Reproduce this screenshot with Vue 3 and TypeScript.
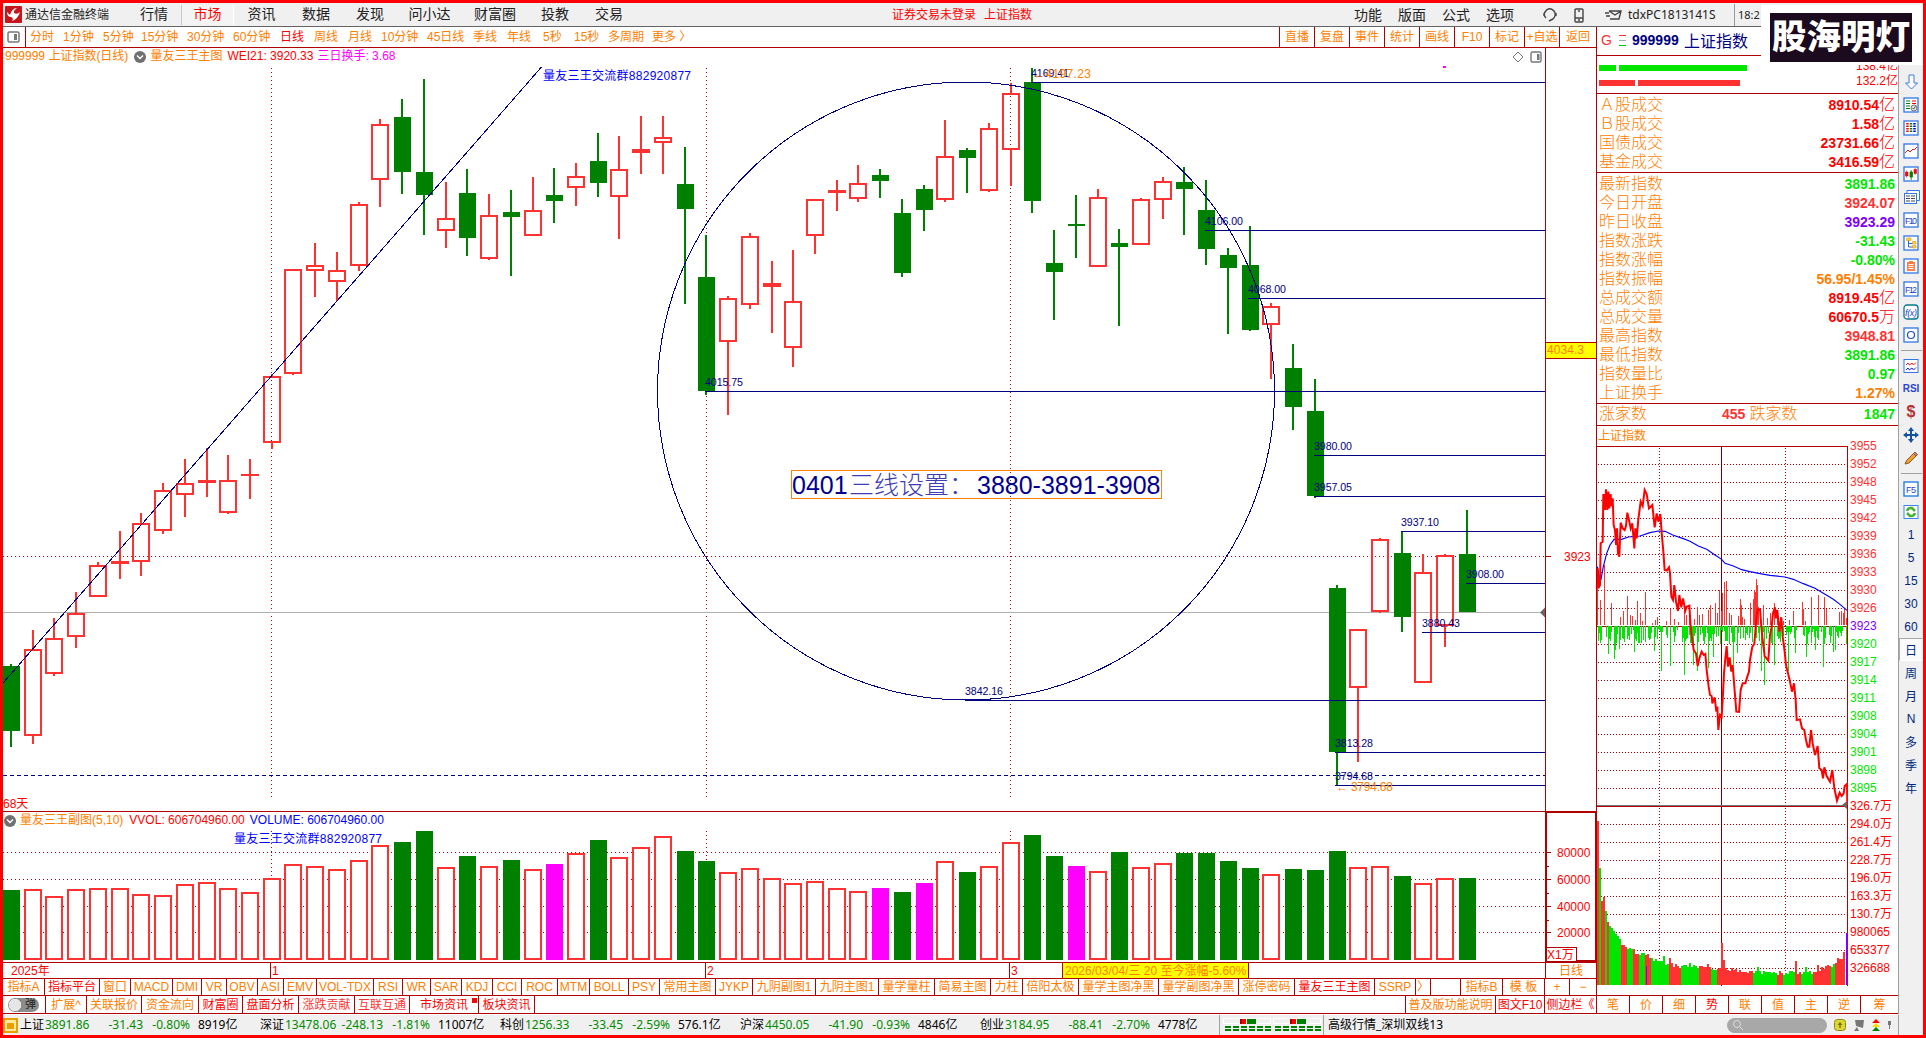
<template>
  <div class="terminal">
    <header class="menu_bar">
      <svg class="logo" width="17" height="17" viewBox="0 0 17 17">
        <rect width="17" height="17" rx="1" fill="#c4161c" />
        <path d="M2 6 L5 9 Q7 2 12 2 Q8 5 9 7 Q12 9 15 6 Q13 13 7 15 Q9 12 6 11 Q2 11 2 6Z" fill="#fff" />
      </svg>
      <span class="app_name">通达信金融终端</span>
      <nav class="menu">
        <span
          v-for="m in menus"
          :key="m.label"
          class="menu_item"
          :class="{ active: m.label === '市场' }"
          :style="{ width: m.width + 'px' }"
          >{{ m.label }}</span
        >
      </nav>
      <div class="notice"><span>证券交易未登录</span><span>上证指数</span></div>
      <nav class="menu_right">
        <span v-for="m in ['功能', '版面', '公式', '选项']" :key="m">{{ m }}</span>
      </nav>
      <svg class="menu_icons" width="84" height="20" viewBox="0 0 84 20" fill="none" stroke="#444" stroke-width="1.4">
        <path d="M5 13 Q2 10 4 7 Q8 1 13 6 Q16 10 12 14 M3 8v3 M15 8v3 M12 14 L8 16" />
        <rect x="34" y="4" width="8" height="13" rx="1" />
        <path d="M34 13h8 M37 6h2 M37 15h2" />
        <path d="M68 6h12l-2 8h-9 M68 6l6 4 6-4 M64 8h4 M65 11h4" />
      </svg>
      <span class="account">tdxPC1813141S</span>
      <span class="clock">18:2</span>
    </header>

    <div class="body">
      <div class="content">
        <div class="main">
          <section class="left">
            <div class="period_bar">
              <svg class="panel_icon" width="13" height="12" viewBox="0 0 13 12">
                <rect x="1" y="1" width="11" height="10" rx="1.5" fill="none" stroke="#777" stroke-width="1.5" />
                <rect x="7" y="3" width="3" height="6" fill="#777" />
              </svg>
              <div class="periods">
                <span
                  v-for="p in periods"
                  :key="p.label"
                  :class="{ active: p.label === '日线' }"
                  :style="{ width: p.width + 'px' }"
                  >{{ p.label }}</span
                >
              </div>
              <div class="tools">
                <span v-for="t in tools" :key="t" class="tool">{{ t }}</span>
              </div>
            </div>

            <div class="chart_row">
              <div class="charts">
                <div class="chart_head">
                  <span class="orange">999999 上证指数(日线)</span>
                  <svg class="chevron" width="12" height="12" viewBox="0 0 12 12">
                    <circle cx="6" cy="6" r="6" fill="#707070" />
                    <path d="M3 4.5L6 7.5L9 4.5" fill="none" stroke="#fff" stroke-width="1.4" />
                  </svg>
                  <span class="orange">量友三王主图</span>
                  <span class="red">WEI21: 3920.33</span>
                  <span class="magenta">三日换手: 3.68</span>
                  <svg class="head_tools" width="30" height="12" viewBox="0 0 30 12" fill="none" stroke="#777">
                    <path d="M6 1L11 6L6 11L1 6Z" />
                    <rect x="19" y="1" width="10" height="10" rx="1.5" stroke-width="1.4" />
                    <rect x="25" y="3" width="2.5" height="6" fill="#777" stroke="none" />
                  </svg>
                </div>
                <svg class="k_chart" width="1542" height="745" viewBox="3 66 1542 745">
                  <g stroke="#b00000" stroke-dasharray="1 3" shape-rendering="crispEdges">
                    <path v-for="x in monthLines" :key="x" :d="`M${x + 0.5} 68V797`" />
                    <path d="M3 556.5H1545" />
                  </g>
                  <path d="M3 612.5H1545" stroke="#b0b0b0" />
                  <path d="M3 775.5H1545" stroke="#000080" stroke-dasharray="4 3" shape-rendering="crispEdges" />
                  <g shape-rendering="crispEdges">
                    <g v-for="(c, i) in candles" :key="i">
                      <template v-if="c[0] === 'g'">
                        <rect :x="cx(i) - 1" :y="c[1]" width="2" :height="c[4] - c[1]" fill="#008000" />
                        <rect :x="Math.max(3, cx(i) - 8)" :y="c[2]" width="17" :height="c[3] - c[2]" fill="#008000" />
                      </template>
                      <template v-else>
                        <rect :x="cx(i) - 1" :y="c[1]" width="2" :height="c[2] - c[1]" fill="#ff3232" />
                        <rect :x="cx(i) - 1" :y="c[3]" width="2" :height="c[4] - c[3]" fill="#ff3232" />
                        <rect
                          v-if="c[3] - c[2] > 4"
                          :x="cx(i) - 8"
                          :y="c[2] + 1"
                          width="16"
                          :height="c[3] - c[2] - 2"
                          fill="none"
                          stroke="#ff3232"
                          stroke-width="2"
                        />
                        <rect v-else :x="cx(i) - 9" :y="c[2]" width="18" :height="c[3] - c[2]" fill="#ff3232" />
                      </template>
                    </g>
                  </g>
                  <g fill="none" stroke="#000080" shape-rendering="crispEdges">
                    <ellipse cx="966" cy="391" rx="308.5" ry="309" />
                    <path d="M3 683L541.5 67" />
                    <path v-for="l in levels" :key="l.text" :d="`M${l.x} ${l.y + 0.5}H1545`" />
                  </g>
                  <g class="level_text">
                    <text v-for="l in levels" :key="l.text" :x="l.x" :y="l.y - 5" textLength="38">{{ l.text }}</text>
                  </g>
                  <text x="1033" y="78" class="t12" fill="#ff8000" textLength="58">←4197.23</text>
                  <text x="1336" y="791" class="t12" fill="#ff8000" textLength="57">← 3794.68</text>
                  <text x="543" y="80" class="t12" fill="#0000ff" textLength="148">量友三王交流群882920877</text>
                  <rect x="1443" y="65" width="3" height="3" fill="#ff00ff" />
                  <path d="M1540 612.5l5-5v10z" fill="#666" />
                  <rect x="791.5" y="470.5" width="370" height="28" fill="none" stroke="#ff8000" />
                  <text x="792" y="494" class="note">
                    0401<tspan x="849" class="note_cn">三线设置：</tspan><tspan x="977">3880-3891-3908</tspan>
                  </text>
                  <text x="3" y="808" class="t12" fill="#ff0000">68天</text>
                </svg>
                <div class="chart_head sub">
                  <svg class="chevron" width="12" height="12" viewBox="0 0 12 12">
                    <circle cx="6" cy="6" r="6" fill="#707070" />
                    <path d="M3 4.5L6 7.5L9 4.5" fill="none" stroke="#fff" stroke-width="1.4" />
                  </svg>
                  <span class="orange">量友三王副图(5,10)</span>
                  <span class="red">VVOL: 606704960.00</span>
                  <span class="blue">VOLUME: 606704960.00</span>
                </div>
                <svg class="v_chart" width="1542" height="133" viewBox="3 829 1542 133">
                  <g stroke="#b00000" stroke-dasharray="1 3" shape-rendering="crispEdges">
                    <path v-for="x in monthLines" :key="x" :d="`M${x + 0.5} 831V960`" />
                    <path v-for="y in volLines" :key="y" :d="`M3 ${y + 0.5}H1545`" />
                  </g>
                  <g shape-rendering="crispEdges">
                    <template v-for="(v, i) in volumes" :key="i">
                      <rect
                        v-if="v[0] === 'r'"
                        :x="cx(i) - 8"
                        :y="v[1] + 1"
                        width="16"
                        :height="958 - v[1]"
                        fill="#fff"
                        stroke="#ff3232"
                        stroke-width="2"
                      />
                      <rect
                        v-else
                        :x="Math.max(3, cx(i) - 8)"
                        :y="v[1]"
                        width="17"
                        :height="960 - v[1]"
                        :fill="v[0] === 'g' ? '#008000' : '#ff00ff'"
                      />
                    </template>
                  </g>
                  <text x="234" y="843" class="t12" fill="#0000ff" textLength="148">量友三王交流群882920877</text>
                </svg>
              </div>
              <svg class="axis" width="51" height="914" viewBox="1545 48 51 914">
                <path d="M1545.5 48V811" stroke="#b00000" />
                <rect x="1546" y="812" width="50" height="149" fill="none" stroke="#b00000" stroke-width="2" />
                <rect x="1546" y="343" width="50" height="15" fill="#ffff00" />
                <path d="M1546 342.5H1596M1546 358.5H1596M1545 556.5h6" stroke="#b00000" />
                <text x="1547" y="354" class="t12" fill="#ff8000" textLength="37">4034.3</text>
                <text x="1564" y="560.5" class="t12" fill="#ff0000">3923</text>
                <g v-for="(y, i) in volLines" :key="y">
                  <path :d="`M1546 ${y + 0.5}h5`" stroke="#b00000" />
                  <path v-if="i < 3" :d="`M1546 ${y + 14.5}h3`" stroke="#b00000" />
                  <text x="1557" :y="y + 4.5" class="t12" fill="#ff0000">{{ 80000 - i * 20000 }}</text>
                </g>
                <rect x="1546.5" y="947.5" width="30" height="14" fill="#fff" stroke="#b00000" />
                <text x="1547" y="959" class="t12" fill="#ff0000">X1万</text>
              </svg>
            </div>

            <div class="date_row">
              <span class="date first">2025年</span>
              <span class="date jan">1</span>
              <span class="date feb">2</span>
              <span class="date mar">3</span>
              <span class="cursor_date">2026/03/04/三 20 至今涨幅-5.60%</span>
              <span class="date_period">日线</span>
            </div>
            <div class="tab_row">
              <span
                v-for="t in indicators"
                :key="t.label"
                class="tab"
                :class="{ active: t.active }"
                :style="{ width: t.width + 'px' }"
                >{{ t.label }}</span
              >
            </div>
            <div class="tab_row second">
              <span class="tab toggle_cell"><span class="toggle">弹</span></span>
              <span
                v-for="t in panels"
                :key="t.label"
                class="tab"
                :class="{ active: t.active, soft: t.soft }"
                :style="{ width: t.width + 'px' }"
                >{{ t.label }}<i v-if="t.dot" class="dot"></i
              ></span>
            </div>
          </section>

          <aside class="quote">
            <div class="quote_head">
              <span class="g_mark">G</span>
              <span class="lines"><i></i><i></i><i></i></span>
              <b>999999</b>
              <span>上证指数</span>
            </div>
            <div class="ratio">
              <div class="ratio_row up"><i class="w17"></i><i class="w128"></i><span>138.4亿</span></div>
              <div class="ratio_row down"><i class="w36"></i><i class="w102"></i><span>132.2亿</span></div>
            </div>
            <div class="quote_list turnover">
              <div v-for="q in turnover" :key="q.label" class="quote_row">
                <span>{{ q.label }}</span
                ><b :class="q.color">{{ q.value }}<em>{{ q.unit }}</em></b>
              </div>
            </div>
            <div class="quote_list">
              <div v-for="q in quotes" :key="q.label" class="quote_row">
                <span>{{ q.label }}</span
                ><b :class="q.color">{{ q.value }}<em>{{ q.unit }}</em></b>
              </div>
            </div>
            <div class="updown">
              <span>涨家数</span><b class="soft_red num_up">455</b><span class="fall">跌家数</span><b class="green num_down">1847</b>
            </div>
            <div class="mini_title">上证指数</div>
            <div class="mini">
              <svg width="252" height="549" viewBox="1596 446 252 549">
                <g stroke="#b00000" shape-rendering="crispEdges">
                  <g stroke-dasharray="1 2">
                    <path v-for="y in miniLines" :key="y" :d="`M1598 ${y + 0.5}H1847`" />
                    <path d="M1659.5 448V985M1785.5 448V985" />
                  </g>
                  <path d="M1597 446.5H1847M1847.5 446V986M1597 626.5H1847M1597 806.5H1847M1596.5 446V995" />
                  <path d="M1721.5 446V986" stroke="#800000" />
                  <path d="M1847 985.5H1848" />
                </g>
                <path d="M1597 805.5H1845" stroke="#777" />
                <g shape-rendering="crispEdges">
                  <rect v-for="(b, i) in upBars" :key="i" :x="b[0]" :y="625 - b[1]" width="1" :height="b[1]" fill="#ff3232" />
                  <rect v-for="(b, i) in downBars" :key="i" :x="b[0]" y="626" width="1" :height="b[1]" fill="#00e600" />
                  <rect
                    v-for="(b, i) in miniVolumes"
                    :key="i"
                    :x="1597 + i * 2"
                    :y="985 - b.h"
                    width="2"
                    :height="b.h"
                    :fill="b.up ? '#ff3232' : '#00e600'"
                  />
                  <rect x="1846" y="933" width="2" height="52" fill="#8000ff" />
                  <rect x="1646" y="966" width="1" height="19" fill="#8000ff" />
                </g>
                <g transform="translate(1540 420) scale(0.33333)" fill="none">
                  <polyline :points="avgLine" stroke="#0000ff" stroke-width="3.5" />
                  <polyline :points="priceLine" stroke="#ff0000" stroke-width="6" />
                </g>
                <path d="M1842 805l5-4v8z" fill="#666" />
              </svg>
              <ul class="mini_axis">
                <li v-for="(t, i) in miniAxis" :key="t" :class="i < 10 ? 'soft_red' : i === 10 ? 'purple' : i < 20 ? 'green' : 'red'">
                  {{ t }}
                </li>
              </ul>
            </div>
            <div class="mini_tabs">
              <span v-for="t in '笔价细势联值主逆筹'" :key="t" :class="{ active: t === '势' }">{{ t }}</span>
            </div>
          </aside>
        </div>

        <footer class="status">
          <svg class="status_icon" width="15" height="15" viewBox="0 0 15 15">
            <rect x="1" y="1" width="13" height="13" fill="#ffe9a0" stroke="#e8a000" stroke-width="2" />
            <rect x="4" y="5" width="7" height="6" fill="#e8a000" />
          </svg>
          <div v-for="s in indexes" :key="s.name" class="index">
            <span>{{ s.name }}</span
            ><span class="fall_num">{{ s.price }}</span
            ><span class="fall_num right">{{ s.change }}</span
            ><span class="fall_num right">{{ s.pct }}</span
            ><span class="amount">{{ s.amount }}</span>
          </div>
          <div class="signal">
            <svg width="100" height="15" viewBox="0 0 100 15" shape-rendering="crispEdges">
              <g v-for="o in [0, 50]" :key="o" :transform="`translate(${o} 0)`">
                <rect x="0.5" y="0.5" width="47" height="5" fill="#f0f0f0" stroke="#fff" />
                <rect x="17" y="1" width="2" height="5" fill="#a00000" />
                <rect x="19" y="1" width="4" height="5" fill="#ff0000" />
                <rect x="24" y="1" width="9" height="5" fill="#008000" />
                <path d="M2 9H48M2 12H48" stroke="#008000" stroke-width="2" stroke-dasharray="6 2" />
              </g>
            </svg>
          </div>
          <span class="server">高级行情_深圳双线13</span>
          <div class="search">
            <svg width="12" height="12" viewBox="0 0 12 12" fill="none" stroke="#ddd">
              <circle cx="5" cy="5" r="3.5" />
              <path d="M8 8l3 3" />
            </svg>
          </div>
          <svg class="status_tools" width="62" height="15" viewBox="0 0 62 15">
            <rect x="0.5" y="1.5" width="11" height="11" rx="3" fill="#dcd53c" stroke="#8c8a00" />
            <path d="M6 4L3.500 7H5.300V10H6.700V7H8.500Z" fill="#77740a" />
            <path d="M21 2L30 2L29 10L22 8Z M23 9L20 13H25Z" fill="#777" />
            <path d="M42 1L46 5H38Z" fill="#ff0000" />
            <path d="M42 5L46 9H38Z" fill="#f0e000" />
            <path d="M42 9L46 13H38Z" fill="#008000" />
            <path d="M54 3h3v4h-3zM55 7h1v4h-1z" fill="#777" />
          </svg>
        </footer>
      </div>

      <div class="side_bar">
        <div class="side_spacer"></div>
        <div v-for="icon in sideTop" :key="icon" class="side_cell">
          <svg v-if="icon === 'down'" width="15" height="16" viewBox="0 0 15 16">
            <path d="M5 1H10V9H13.500L7.500 15L1.500 9H5Z" fill="#fff" stroke="#3c78dc" />
          </svg>
          <svg v-else width="17" height="16" viewBox="0 0 17 16">
            <rect
              x="1"
              y="1"
              width="14"
              height="14"
              :rx="icon === 'fx' ? 3 : 0"
              fill="#fff"
              :stroke="icon === 'fx' ? '#0a7890' : '#3278e6'"
              stroke-width="1.3"
            />
            <g v-if="icon === 'check'" fill="none">
              <path d="M3 4H7M3 6.500H7M3 9H7M3 11.500H7" stroke="#008000" />
              <path d="M9 4H13M9 6.500H13" stroke="#f00" />
              <circle cx="11" cy="11" r="3" fill="#ddd" stroke="#777" />
              <path d="M9.500 11l1 1 2-2.500" stroke="#555" />
            </g>
            <g v-else-if="icon === 'table'" stroke-dasharray="1.500 1" stroke-width="2.500">
              <path d="M4.500 3V13" stroke="#f00" />
              <path d="M8 3V13" stroke="#008000" />
              <path d="M11.500 3V13" stroke="#00f" />
            </g>
            <path v-else-if="icon === 'line'" d="M2 10L5 7L7 9L10 6L11 7L14 4" fill="none" stroke="#d22" />
            <g v-else-if="icon === 'candle'">
              <path d="M2.500 6h2.500v4H2.500zM11 3.500h2.500v4H11zM3.500 4.500v7M12.200 2v7" fill="#f00" stroke="#f00" stroke-width=".6" />
              <path d="M7 6h2.500v5H7zM8.200 4v10" fill="#008000" stroke="#008000" stroke-width=".8" />
            </g>
            <g v-else-if="icon === 'pages'">
              <rect width="17" height="16" fill="#f0f0f0" />
              <path d="M4 4V1.500H16.500V11.500H14" fill="#fff" stroke="#3278e6" />
              <rect x="1.500" y="4.500" width="12" height="10" fill="#fff" stroke="#3278e6" />
              <path d="M3 7H7M3 9.500H7M3 12H7M8 7H12M8 9.500H12M8 12H12" stroke="#445" />
            </g>
            <g v-else-if="icon === 'tree'">
              <path d="M5.500 5V12H10M5.500 8.500H10" fill="none" stroke="#3264c8" />
              <path d="M3.500 3H8V5.500H3.500zM9.500 6.500H13V9H9.500zM9.500 10.500H13V13H9.500z" fill="#ffd24a" stroke="#d89a00" stroke-width=".6" />
            </g>
            <g v-else-if="icon === 'note'">
              <path d="M4 4H12V13H4zM6 3H10V4H6z" fill="#ff7d46" />
              <path d="M5.500 6.500H10.500M5.500 8.500H10.500M5.500 10.500H10.500" stroke="#fff" />
            </g>
            <circle v-else-if="icon === 'ring'" cx="8" cy="8" r="3.500" fill="none" stroke="#1e50c8" stroke-width="1.200" />
            <text v-else x="8" y="11.500" class="icon_text" :class="{ italic: icon === 'fx' }" textLength="12">
              {{ iconLabels[icon] }}
            </text>
          </svg>
        </div>
        <div class="side_sep"></div>
        <div class="side_cell">
          <svg width="17" height="16" viewBox="0 0 17 16" fill="none">
            <rect x="1" y="1.500" width="14" height="13" fill="#fff" stroke="#3278e6" />
            <path d="M3 7L5 5L6.500 7L9 5L10.500 7L13 4.500" stroke="#d22" />
            <path d="M3 12L5 10L6.500 12L9 10L10.500 12L13 9.500" stroke="#22c" />
          </svg>
        </div>
        <div class="side_cell rsi">RSI</div>
        <div class="side_cell dollar">$</div>
        <div class="side_cell">
          <svg width="16" height="16" viewBox="0 0 16 16" fill="#1450a0">
            <path d="M8 0L11 4H5zM8 16L5 12H11zM0 8L4 5V11zM16 8L12 11V5z" />
            <path d="M8 3V13M3 8H13" stroke="#1450a0" stroke-width="2" />
          </svg>
        </div>
        <div class="side_cell">
          <svg width="16" height="16" viewBox="0 0 16 16">
            <path d="M2 14L3.500 10.500L10.500 3.500L13 6L6 13Z" fill="#f0a030" stroke="#8a5a20" />
            <path d="M10.500 3.500L12 2L14.500 4.500L13 6Z" fill="#e07a70" stroke="#8a5a50" />
          </svg>
        </div>
        <div class="side_sep"></div>
        <div class="side_cell">
          <svg width="17" height="16" viewBox="0 0 17 16">
            <rect x="1" y="1" width="14" height="14" fill="#fff" stroke="#1478dc" stroke-width="1.300" />
            <text x="8" y="11.500" class="icon_text" textLength="10">F5</text>
          </svg>
        </div>
        <div class="side_cell">
          <svg width="17" height="16" viewBox="0 0 17 16" fill="none">
            <rect x="1" y="1.500" width="14" height="13" fill="#fff" stroke="#3c82f0" />
            <path d="M4 7Q5 3.500 9 4L12 7M12 9Q11 12.500 7 12L4 9" stroke="#46b432" stroke-width="2.500" />
          </svg>
        </div>
        <div v-for="t in sidePeriods" :key="t" class="side_cell period" :class="{ active: t === '日' }">{{ t }}</div>
      </div>
    </div>

    <div class="watermark"><span>股海明灯</span></div>
  </div>
</template>

<script lang="ts" setup>
type Candle = [string, number, number, number, number];
type Volume = [string, number];

interface Tab {
  label: string;
  width: number;
  active?: boolean;
  soft?: boolean;
  dot?: boolean;
}

interface Quote {
  label: string;
  value: string;
  unit?: string;
  color: string;
}

const menus: Tab[] = [
  { label: '行情', width: 54 },
  { label: '市场', width: 53 },
  { label: '资讯', width: 55 },
  { label: '数据', width: 54 },
  { label: '发现', width: 54 },
  { label: '问小达', width: 65 },
  { label: '财富圈', width: 66 },
  { label: '投教', width: 54 },
  { label: '交易', width: 54 },
];

const periods: Tab[] = [
  { label: '分时', width: 33 },
  { label: '1分钟', width: 40 },
  { label: '5分钟', width: 38 },
  { label: '15分钟', width: 46 },
  { label: '30分钟', width: 46 },
  { label: '60分钟', width: 47 },
  { label: '日线', width: 34 },
  { label: '周线', width: 34 },
  { label: '月线', width: 33 },
  { label: '10分钟', width: 46 },
  { label: '45日线', width: 46 },
  { label: '季线', width: 34 },
  { label: '年线', width: 36 },
  { label: '5秒', width: 31 },
  { label: '15秒', width: 34 },
  { label: '多周期', width: 44 },
  { label: '更多 〉', width: 50 },
];

const tools = ['直播', '复盘', '事件', '统计', '画线', 'F10', '标记', '+自选', '返回'];

const indicators: Tab[] = [
  { label: '指标A', width: 42 },
  { label: '指标平台', width: 55, active: true },
  { label: '窗口', width: 31 },
  { label: 'MACD', width: 42 },
  { label: 'DMI', width: 29 },
  { label: 'VR', width: 25 },
  { label: 'OBV', width: 31 },
  { label: 'ASI', width: 26 },
  { label: 'EMV', width: 33 },
  { label: 'VOL-TDX', width: 57 },
  { label: 'RSI', width: 29 },
  { label: 'WR', width: 28 },
  { label: 'SAR', width: 31 },
  { label: 'KDJ', width: 31 },
  { label: 'CCI', width: 29 },
  { label: 'ROC', width: 36 },
  { label: 'MTM', width: 32 },
  { label: 'BOLL', width: 39 },
  { label: 'PSY', width: 31 },
  { label: '常用主图', width: 56 },
  { label: 'JYKP', width: 37 },
  { label: '九阴副图1', width: 63 },
  { label: '九阴主图1', width: 63 },
  { label: '量学量柱', width: 56 },
  { label: '简易主图', width: 56 },
  { label: '力柱', width: 32 },
  { label: '倍阳太极', width: 56 },
  { label: '量学主图净黑', width: 80 },
  { label: '量学副图净黑', width: 80 },
  { label: '涨停密码', width: 56 },
  { label: '量友三王主图', width: 80, active: true },
  { label: 'SSRP', width: 41 },
  { label: '〉', width: 15 },
  { label: '', width: 30 },
  { label: '指标B', width: 42 },
  { label: '模 板', width: 42 },
  { label: '+', width: 25 },
  { label: '−', width: 26 },
];

const panels: Tab[] = [
  { label: '扩展^', width: 41 },
  { label: '关联报价', width: 55 },
  { label: '资金流向', width: 57 },
  { label: '财富圈', width: 44, active: true },
  { label: '盘面分析', width: 56, active: true },
  { label: '涨跌贡献', width: 56, soft: true },
  { label: '互联互通', width: 55, soft: true },
  { label: '市场资讯', width: 69, active: true, dot: true },
  { label: '板块资讯', width: 56, active: true },
  { label: '', width: 871 },
  { label: '普及版功能说明', width: 90 },
  { label: '图文F10', width: 49, active: true },
  { label: '侧边栏《', width: 51, active: true },
];

// x centre of the i-th day
const cx = (i: number) => Math.round(11 + i * 21.73);

const monthLines = [271, 706, 1010];
const volLines = [852, 879, 906, 932];

// [colour, high, body top, body bottom, low]
const candles: Candle[] = [
  ['g', 664, 666, 731, 747],
  ['r', 630, 649, 736, 744],
  ['r', 618, 638, 674, 676],
  ['r', 592, 613, 637, 648],
  ['r', 562, 565, 597, 597],
  ['r', 531, 561, 564, 579],
  ['r', 513, 523, 562, 576],
  ['r', 483, 490, 531, 534],
  ['r', 459, 483, 495, 517],
  ['r', 448, 480, 483, 497],
  ['r', 455, 480, 513, 514],
  ['r', 459, 474, 476, 499],
  ['r', 374, 376, 443, 449],
  ['r', 269, 269, 374, 375],
  ['r', 243, 265, 271, 297],
  ['r', 252, 270, 282, 301],
  ['r', 202, 204, 266, 271],
  ['r', 119, 124, 180, 207],
  ['g', 99, 117, 172, 194],
  ['g', 79, 172, 195, 235],
  ['r', 182, 218, 231, 248],
  ['g', 169, 193, 238, 256],
  ['r', 194, 215, 259, 260],
  ['g', 190, 212, 217, 276],
  ['r', 177, 210, 236, 236],
  ['g', 168, 195, 201, 223],
  ['r', 163, 176, 188, 206],
  ['g', 133, 161, 183, 197],
  ['r', 136, 169, 197, 239],
  ['r', 116, 149, 153, 174],
  ['r', 116, 137, 143, 174],
  ['g', 147, 184, 209, 304],
  ['g', 235, 277, 391, 395],
  ['r', 296, 298, 342, 415],
  ['r', 233, 236, 305, 309],
  ['r', 261, 283, 287, 333],
  ['r', 250, 301, 348, 367],
  ['r', 199, 199, 236, 254],
  ['r', 180, 190, 193, 211],
  ['r', 165, 183, 199, 202],
  ['g', 169, 175, 181, 198],
  ['g', 199, 213, 273, 277],
  ['g', 185, 189, 210, 231],
  ['r', 120, 156, 200, 202],
  ['g', 148, 150, 158, 193],
  ['r', 123, 128, 191, 192],
  ['r', 83, 93, 150, 186],
  ['g', 68, 82, 201, 213],
  ['g', 230, 263, 272, 320],
  ['g', 195, 224, 226, 258],
  ['r', 189, 197, 267, 267],
  ['g', 229, 243, 247, 326],
  ['r', 198, 199, 245, 245],
  ['r', 177, 181, 200, 219],
  ['g', 167, 182, 189, 235],
  ['g', 180, 210, 249, 265],
  ['g', 248, 255, 268, 334],
  ['g', 226, 265, 330, 331],
  ['r', 303, 306, 325, 379],
  ['g', 344, 368, 407, 430],
  ['g', 379, 411, 496, 498],
  ['g', 585, 588, 752, 785],
  ['r', 629, 629, 688, 762],
  ['r', 538, 539, 612, 613],
  ['g', 532, 553, 617, 632],
  ['r', 554, 572, 683, 683],
  ['r', 554, 555, 626, 647],
  ['g', 510, 554, 612, 612],
];

const volTops = [
  890, 889, 896, 889, 888, 888, 894, 895, 884, 882, 888, 892, 878, 864, 866, 869, 860, 845, 842, 831, 867, 856, 866,
  860, 869, 864, 853, 840, 857, 847, 836, 851, 861, 872, 868, 878, 883, 881, 888, 891, 888, 892, 883, 861, 872, 866,
  842, 835, 856, 866, 871, 852, 867, 863, 853, 853, 861, 868, 874, 869, 870, 851, 867, 866, 876, 883, 878, 878,
];
const magentaDays = [25, 40, 42, 49];
const greenDays = [0, 18, 19, 21, 23, 27, 31, 32, 41, 44, 47, 48, 51, 54, 55, 56, 57, 59, 60, 61, 64, 67];
const volumes: Volume[] = volTops.map((y, i) => [
  magentaDays.includes(i) ? 'm' : greenDays.includes(i) ? 'g' : 'r',
  y,
]);

const levels = [
  { x: 1031, y: 82, text: '4169.41' },
  { x: 1205, y: 230, text: '4106.00' },
  { x: 1248, y: 298, text: '4068.00' },
  { x: 705, y: 391, text: '4015.75' },
  { x: 1314, y: 455, text: '3980.00' },
  { x: 1314, y: 496, text: '3957.05' },
  { x: 1401, y: 531, text: '3937.10' },
  { x: 1466, y: 583, text: '3908.00' },
  { x: 1422, y: 632, text: '3880.43' },
  { x: 965, y: 700, text: '3842.16' },
  { x: 1335, y: 752, text: '3813.28' },
  { x: 1335, y: 785, text: '3794.68' },
];

const turnover: Quote[] = [
  { label: 'Ａ股成交', value: '8910.54', unit: '亿', color: 'red' },
  { label: 'Ｂ股成交', value: '1.58', unit: '亿', color: 'red' },
  { label: '国债成交', value: '23731.66', unit: '亿', color: 'red' },
  { label: '基金成交', value: '3416.59', unit: '亿', color: 'red' },
];

const quotes: Quote[] = [
  { label: '最新指数', value: '3891.86', color: 'green' },
  { label: '今日开盘', value: '3924.07', color: 'soft_red' },
  { label: '昨日收盘', value: '3923.29', color: 'purple' },
  { label: '指数涨跌', value: '-31.43', color: 'green' },
  { label: '指数涨幅', value: '-0.80%', color: 'green' },
  { label: '指数振幅', value: '56.95/1.45%', color: 'orange' },
  { label: '总成交额', value: '8919.45', unit: '亿', color: 'red' },
  { label: '总成交量', value: '60670.5', unit: '万', color: 'red' },
  { label: '最高指数', value: '3948.81', color: 'soft_red' },
  { label: '最低指数', value: '3891.86', color: 'green' },
  { label: '指数量比', value: '0.97', color: 'green' },
  { label: '上证换手', value: '1.27%', color: 'orange' },
];

const miniAxis = [
  '3955', '3952', '3948', '3945', '3942', '3939', '3936', '3933', '3930', '3926', '3923', '3920', '3917', '3914',
  '3911', '3908', '3904', '3901', '3898', '3895', '326.7万', '294.0万', '261.4万', '228.7万', '196.0万', '163.3万',
  '130.7万', '980065', '653377', '326688',
];
const miniLines = Array.from({ length: 29 }, (_, i) => 464 + i * 18).filter((y) => y !== 626 && y !== 806);

const avgLine =
  '172,440 178,475 183,478 190,440 200,400 210,375 222,358 245,358 265,351 300,348 330,338 355,333 375,334 400,346 430,356 450,364 475,378 500,388 525,405 545,418 555,430 580,438 605,449 630,455 660,461 690,466 735,471 760,478 790,491 825,505 850,520 880,538 900,553 921,571';
const priceLine =
  '173,445 175,505 180,495 182,370 188,365 190,225 194,225 195,270 198,208 202,270 205,215 208,265 212,222 214,258 218,235 221,315 225,330 228,375 231,325 234,400 238,410 242,308 248,325 254,330 258,318 262,278 267,300 272,325 277,310 283,385 286,325 290,355 295,298 302,245 308,258 314,210 320,222 327,265 337,255 344,322 350,280 355,305 361,282 366,350 370,395 374,450 380,452 387,442 390,460 394,530 399,540 403,495 408,545 414,573 418,525 424,562 429,535 436,572 440,560 448,557 452,620 457,660 461,690 468,700 473,738 478,715 485,695 491,705 496,702 500,750 506,800 510,825 515,828 517,850 524,832 529,875 532,860 535,930 540,885 545,890 548,840 552,760 556,715 560,678 564,740 569,712 574,755 578,735 583,800 589,875 597,876 602,810 608,790 616,790 622,770 627,755 630,720 637,680 643,672 649,595 653,568 660,568 664,620 668,660 674,708 685,722 690,645 695,620 699,580 705,562 708,595 712,570 718,635 724,592 728,650 734,695 738,735 744,760 749,780 756,815 762,790 767,840 770,900 780,898 786,925 793,930 798,960 803,980 808,980 813,930 818,970 825,1005 833,978 838,1045 845,1050 849,1075 853,1042 860,1068 870,1085 877,1050 883,1105 891,1142 899,1118 905,1128 911,1120 914,1098 921,1092 922,1155';

// small repeatable jitter for the minute bars
const noise = (i: number) => {
  const n = Math.sin(i * 127.1 + 3.7) * 43758.5453;
  return n - Math.floor(n);
};

const upBars: number[][] = [
  [1597, 58], [1600, 25], [1604, 60], [1611, 22], [1620, 8], [1623, 14], [1627, 29], [1630, 10], [1632, 9], [1635, 5],
  [1637, 24], [1640, 12], [1642, 4], [1645, 33], [1652, 2], [1655, 5], [1657, 8], [1666, 4], [1670, 16], [1674, 6],
  [1678, 3], [1684, 15], [1686, 10], [1689, 14], [1694, 6], [1697, 18], [1699, 10], [1702, 11], [1708, 15], [1710, 20],
  [1715, 22], [1717, 12], [1719, 35], [1721, 14], [1722, 32], [1724, 43], [1726, 44], [1729, 12], [1731, 10],
  [1738, 9], [1740, 26], [1741, 20], [1742, 8], [1744, 6], [1750, 22], [1753, 26], [1754, 35], [1755, 33], [1756, 46],
  [1757, 40], [1758, 18], [1763, 20], [1767, 7], [1770, 12], [1774, 22], [1777, 10], [1780, 8], [1783, 4], [1789, 5],
  [1793, 14], [1802, 23], [1803, 16], [1805, 4], [1811, 28], [1818, 30], [1824, 28], [1826, 16], [1839, 13],
  [1841, 14], [1843, 12], [1844, 16], [1846, 7],
];

const downSpikes: Record<number, number> = {
  1608: 28, 1614: 33, 1615: 24, 1619: 23, 1634: 26, 1654: 25, 1661: 45, 1670: 40, 1684: 49, 1693: 39, 1697: 45,
  1708: 42, 1713: 31, 1733: 39, 1737: 27, 1761: 45, 1764: 59, 1774: 39, 1788: 45, 1795: 27, 1806: 31, 1815: 24,
  1823: 41, 1833: 26, 1835: 24,
};
const downBars: number[][] = Array.from({ length: 250 }, (_, i) => {
  const x = 1597 + i;
  return [x, downSpikes[x] ?? (noise(i) > 0.38 ? Math.round(3 + noise(i + 300) * 15) : 0)];
});

const volumeShape: [number, number][] = [
  [0, 164], [1, 117], [2, 84], [3, 88], [4, 74], [5, 62], [7, 58], [9, 50], [11, 44], [14, 38], [18, 34], [21, 30],
  [24, 31], [28, 26], [34, 21], [42, 19], [50, 18], [60, 16], [75, 14], [85, 12], [105, 12], [112, 16], [118, 21],
  [122, 26], [124, 30],
];
const volumePeaks: Record<number, number> = {
  33: 29, 36: 27, 46: 22, 55: 21, 62: 42, 63: 25, 80: 18, 99: 24, 104: 18, 110: 20, 120: 27, 122: 26, 123: 33,
};
const miniVolumes = Array.from({ length: 124 }, (_, i) => {
  const k = volumeShape.findIndex(([x]) => x > i);
  const [x0, h0] = volumeShape[k - 1];
  const [x1, h1] = volumeShape[k];
  const base = h0 + ((h1 - h0) * (i - x0)) / (x1 - x0);
  const block = noise(Math.floor(i / 3) + 40);
  return {
    h: volumePeaks[i] ?? Math.round(base + (i > 4 ? noise(i + 9) * 4 - 2 : 0)),
    up: i === 0 || i === 2 || i === 3 || i === 62 || i > 118 || (i > 4 && block > 0.48),
  };
});

const indexes = [
  { name: '上证', price: '3891.86', change: '-31.43', pct: '-0.80%', amount: '8919亿' },
  { name: '深证', price: '13478.06', change: '-248.13', pct: '-1.81%', amount: '11007亿' },
  { name: '科创', price: '1256.33', change: '-33.45', pct: '-2.59%', amount: '576.1亿' },
  { name: '沪深', price: '4450.05', change: '-41.90', pct: '-0.93%', amount: '4846亿' },
  { name: '创业', price: '3184.95', change: '-88.41', pct: '-2.70%', amount: '4778亿' },
];

const sideTop = ['down', 'check', 'table', 'line', 'candle', 'pages', 'f10', 'tree', 'note', 'f12', 'fx', 'ring'];
const iconLabels: Record<string, string> = { f10: 'F10', f12: 'F12', fx: 'f(x)' };
const sidePeriods = ['1', '5', '15', '30', '60', '日', '周', '月', 'N', '多', '季', '年'];
</script>

<style>
body {
  margin: 0;
  overflow: hidden;
}
</style>

<style scoped>
.terminal {
  position: relative;
  display: flex;
  flex-direction: column;
  box-sizing: border-box;
  width: 1926px;
  height: 1038px;
  border: 3px solid #ff0000;
  background-color: #fff;
  font-family: 'Liberation Sans', 'Noto Sans CJK SC', sans-serif;
  font-size: 12px;
  white-space: nowrap;
}

svg {
  display: block;
  flex: none;
}

.red {
  color: #ff0000;
}

.soft_red {
  color: #ff3232;
}

.green {
  color: #00e600;
}

.orange {
  color: #ff8000;
}

.magenta {
  color: #ff00ff;
}

.blue {
  color: #0000ff;
}

.purple {
  color: #8000ff;
}

/* top menu */
.menu_bar {
  display: flex;
  align-items: center;
  box-sizing: border-box;
  height: 24px;
  flex: none;
  padding-left: 2px;
  border-bottom: 1px solid #646464;
  background-color: #f0f0f0;
  line-height: 20px;
  color: #222;
}

.app_name {
  width: 94px;
  margin-left: 3px;
}

.menu {
  display: flex;
  align-items: center;
  height: 23px;
  padding-left: 8px;
  font-size: 14px;
}

.menu_item {
  box-sizing: border-box;
  height: 20px;
  line-height: 18px;
  text-align: center;
}

.menu_item.active {
  border-left: 1px solid #c8c8c8;
  border-right: 1px solid #fff;
  background-color: #f4f4f4;
  color: #ff0000;
}

.notice {
  display: flex;
  gap: 8px;
  width: 462px;
  margin-left: 256px;
  color: #ff0000;
}

.menu_right {
  display: flex;
  gap: 16px;
  width: 187px;
  line-height: 18px;
  font-size: 14px;
}

.menu_right span {
  width: 28px;
}

.account {
  width: 106px;
  margin-left: 3px;
  font-family: 'Noto Sans', sans-serif;
  font-size: 12px;
}

.clock {
  height: 22px;
  padding-left: 3px;
  border-left: 1px solid #999;
  line-height: 22px;
  font-family: 'Noto Sans', sans-serif;
  font-size: 11px;
}

.body {
  display: flex;
  flex: 1;
  min-height: 0;
}

.content {
  width: 1896px;
}

.main {
  display: flex;
  height: 987px;
}

.left {
  width: 1593px;
}

/* period bar */
.period_bar {
  display: flex;
  align-items: stretch;
  box-sizing: border-box;
  height: 21px;
  border-bottom: 1px solid #b00000;
  line-height: 21px;
  color: #ff8000;
}

.panel_icon {
  margin: 4px 5px 0 4px;
}

.periods {
  display: flex;
  padding-left: 4px;
  border-left: 1px solid #b00000;
}

.periods .active {
  color: #ff0000;
}

.tools {
  display: flex;
  margin-left: auto;
}

.tool {
  box-sizing: border-box;
  width: 35px;
  border-left: 1px solid #b00000;
  text-align: center;
}

.tool:last-child {
  width: 37px;
}

/* charts */
.chart_row {
  display: flex;
  height: 914px;
}

.charts {
  width: 1542px;
}

.chart_head {
  display: flex;
  align-items: center;
  height: 18px;
  padding-left: 2px;
  line-height: 16px;
}

.chart_head span {
  height: 18px;
}

.chart_head .chevron {
  margin: 0 4px 0 6px;
}

.chart_head .red {
  margin: 0 4px 0 5px;
}

.head_tools {
  margin-left: auto;
  margin-right: 3px;
}

.chart_head.sub {
  height: 17px;
  padding-left: 0;
  border-top: 1px solid #b00000;
  line-height: 17px;
}

.chart_head.sub .chevron {
  margin: 0 4px 0 1px;
}

.chart_head.sub .red {
  margin: 0 5px 0 6px;
}

.t12 {
  font-size: 12px;
}

.level_text {
  fill: #000080;
  font-size: 10.600px;
}

.note {
  fill: #000090;
  font-size: 25px;
}

.note_cn {
  fill: #3c3cb4;
  font-weight: 300;
}

/* bottom rows */
.date_row {
  position: relative;
  display: flex;
  box-sizing: border-box;
  height: 17px;
  border-top: 1px solid #b00000;
  border-bottom: 1px solid #b00000;
  line-height: 16px;
}

.date {
  box-sizing: border-box;
  padding-left: 1px;
  border-left: 1px solid #b00000;
  color: #ff0000;
}

.date.first {
  width: 267px;
  padding-left: 8px;
  border-left: none;
}

.date.jan {
  width: 435px;
}

.date.feb {
  width: 304px;
}

.date.mar {
  width: 53px;
}

.cursor_date {
  box-sizing: border-box;
  width: 187px;
  padding-left: 2px;
  border: solid #b00000;
  border-width: 0 1px;
  background-color: #ffff00;
  color: #ff8000;
}

.date_period {
  box-sizing: border-box;
  width: 51px;
  margin-left: auto;
  border-left: 1px solid #b00000;
  text-align: center;
  color: #ff8000;
}

.tab_row {
  display: flex;
  box-sizing: border-box;
  height: 17px;
  border-bottom: 1px solid #b00000;
  line-height: 16px;
}

.tab_row.second {
  height: 18px;
  line-height: 18px;
}

.tab {
  position: relative;
  box-sizing: border-box;
  flex: none;
  border-right: 1px solid #b00000;
  text-align: center;
  color: #ff8000;
}

.tab:last-child {
  border-right: none;
}

.tab.active {
  color: #ff0000;
}

.tab.soft {
  color: #ff3232;
}

.toggle_cell {
  display: flex;
  align-items: center;
  width: 43px;
  padding-left: 5px;
}

.toggle {
  box-sizing: border-box;
  width: 31px;
  height: 14px;
  padding-left: 14px;
  border-radius: 7px;
  background: radial-gradient(circle at 7px 7px, #e6e6e6 6px, #8c8c8c 6.500px);
  line-height: 13px;
  font-size: 11px;
  color: #222;
}

.dot {
  position: absolute;
  top: 2px;
  right: 1px;
  width: 5px;
  height: 5px;
  background-color: #ff0000;
}

/* quote panel */
.quote {
  box-sizing: border-box;
  width: 303px;
  border-left: 1px solid #b00000;
  border-right: 1px solid #a0a0a0;
}

.quote_head {
  display: flex;
  align-items: center;
  box-sizing: border-box;
  height: 29px;
  padding: 0 0 2px 4px;
  border-bottom: 1px solid #b00000;
  font-size: 16px;
  color: #000080;
}

.quote_head b {
  width: 52px;
  font-size: 14px;
}

.g_mark {
  width: 18px;
  font-size: 14px;
  color: #ff3232;
}

.lines {
  display: flex;
  flex-direction: column;
  gap: 4px;
  width: 7px;
  margin-right: 6px;
}

.lines i {
  height: 1px;
  background-color: #ff3232;
}

.lines i:nth-child(2) {
  background-color: #aaa;
}

.lines i:nth-child(3) {
  background-color: #00c800;
}

.ratio {
  box-sizing: border-box;
  height: 38px;
  padding: 4px 0 0 2px;
  border-bottom: 1px solid #b00000;
}

.ratio_row {
  display: flex;
  align-items: center;
  gap: 3px;
  height: 15px;
}

.ratio_row i {
  height: 6px;
}

.ratio_row span {
  height: 15px;
  margin-left: auto;
  line-height: 12px;
  color: #ff0000;
}

.up i {
  background-color: #00e600;
}

.down i {
  background-color: #ff3232;
}

.w17 {
  width: 17px;
}

.w128 {
  width: 128px;
}

.w36 {
  width: 36px;
}

.w102 {
  width: 102px;
}

.quote_list {
  padding: 2px 3px 0 2px;
  border-bottom: 1px solid #b00000;
}

.quote_row {
  display: flex;
  justify-content: space-between;
  height: 19px;
  line-height: 18px;
  font-size: 16px;
  font-weight: 300;
  color: #ff8000;
}

.quote_row b {
  font-size: 14px;
  font-weight: 700;
}

.quote_row em {
  font-size: 16px;
  font-style: normal;
  font-weight: 300;
}

.updown {
  display: flex;
  box-sizing: border-box;
  height: 22px;
  padding: 0 3px 0 2px;
  border-bottom: 1px solid #b00000;
  line-height: 20px;
  font-size: 16px;
  font-weight: 300;
  color: #ff8000;
}

.updown b {
  font-size: 14px;
  font-weight: 700;
}

.num_up {
  margin-left: 75px;
}

.fall {
  margin-left: 4px;
}

.num_down {
  margin-left: auto;
}

.mini_title {
  height: 20px;
  padding-left: 1px;
  line-height: 21px;
  color: #ff8000;
}

.mini {
  display: flex;
  height: 549px;
  margin-left: -1px;
}

.mini_axis {
  margin: -9px 0 0 2px;
  padding: 0;
  list-style: none;
}

.mini_axis li {
  height: 18px;
  line-height: 18px;
}

.mini_tabs {
  display: flex;
  box-sizing: border-box;
  height: 19px;
  border-top: 1px solid #b00000;
  border-bottom: 1px solid #b00000;
  line-height: 18px;
}

.mini_tabs span {
  box-sizing: border-box;
  width: 33px;
  border-right: 1px solid #b00000;
  text-align: center;
  color: #ff8000;
}

.mini_tabs span:last-child {
  flex: 1;
  border-right: none;
}

.mini_tabs .active {
  color: #ff0000;
}

/* status bar */
.status {
  display: flex;
  align-items: center;
  box-sizing: border-box;
  height: 21px;
  border-top: 1px solid #fff;
  border-right: 1px solid #a0a0a0;
  background-color: #f0f0f0;
  font-family: 'Noto Sans', 'Noto Sans CJK SC', sans-serif;
  line-height: 22px;
  color: #000;
}

.status_icon {
  margin-right: 2px;
}

.index {
  display: grid;
  grid-template-columns: 25px 55px 43px 47px 70px;
  width: 240px;
}

.fall_num {
  color: #008c00;
}

.right {
  text-align: right;
}

.amount {
  padding-left: 8px;
}

.signal {
  margin-left: -1px;
  padding: 3px 0 2px 3px;
  border: solid #a0a0a0;
  border-width: 0 1px;
}

.server {
  width: 399px;
  margin-left: 4px;
}

.search {
  display: flex;
  align-items: center;
  width: 95px;
  height: 15px;
  padding-left: 5px;
  border-radius: 8px;
  background-color: #a8a8a8;
}

.status_tools {
  margin-left: 7px;
}

/* side tool bar */
.side_bar {
  width: 24px;
  background-color: #f0f0f0;
}

.side_spacer {
  height: 43px;
}

.side_cell {
  display: flex;
  align-items: center;
  justify-content: center;
  height: 23px;
  font-size: 12px;
  color: #002878;
}

.side_sep {
  height: 3px;
  margin: 4px 1px 0 2px;
  border-top: 1px solid #a0a0a0;
}

.icon_text {
  fill: #1e46c8;
  font-size: 9px;
  text-anchor: middle;
}

.italic {
  font-style: italic;
}

.rsi {
  font-size: 10px;
  font-weight: bold;
  color: #2846d2;
}

.dollar {
  font-size: 16px;
  font-weight: bold;
  color: #b43232;
}

.period.active {
  box-sizing: border-box;
  border: 1px solid #aaa;
  border-color: #aaa #fff #fff #aaa;
  background-color: #fafafa;
}

/* banner floating over the top right corner */
.watermark {
  position: absolute;
  top: 2px;
  right: 0;
  box-sizing: border-box;
  width: 162px;
  height: 60px;
  padding: 8px 0 0 9px;
  background-color: #fff;
}

.watermark span {
  display: block;
  width: 142px;
  height: 49px;
  background-color: #1c0a1e;
  text-align: center;
  line-height: 48px;
  font-size: 34.500px;
  font-weight: 900;
  color: #fff;
}
</style>
